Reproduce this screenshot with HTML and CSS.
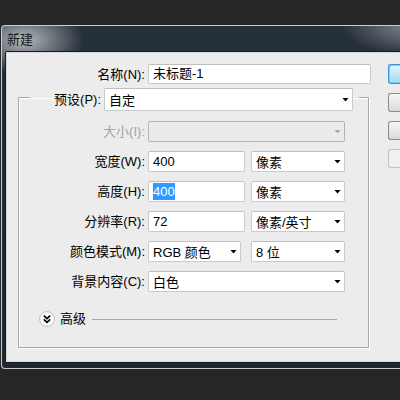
FILE: index.html
```html
<!DOCTYPE html>
<html lang="zh">
<head>
<meta charset="utf-8">
<title>新建</title>
<link rel="stylesheet" href="styles.css">
</head>
<body>
<div class="window">
  <div class="titlebar">新建</div>
  <div class="content">
    <div class="main">
      <div class="row-name">
        <div class="label name-label">名称(N):</div>
        <div class="field name-field">未标题-1</div>
      </div>
      <fieldset class="group">
        <legend class="legend">
          <span class="label legend-label">预设(P):</span>
          <span class="select preset">自定</span>
        </legend>
        <div class="row first">
          <div class="label disabled">大小(I):</div>
          <div class="select wide off"></div>
        </div>
        <div class="row">
          <div class="label">宽度(W):</div>
          <div class="field num">400</div>
          <div class="select unit">像素</div>
        </div>
        <div class="row">
          <div class="label">高度(H):</div>
          <div class="field num"><span class="sel">400</span></div>
          <div class="select unit">像素</div>
        </div>
        <div class="row">
          <div class="label">分辨率(R):</div>
          <div class="field num">72</div>
          <div class="select unit">像素/英寸</div>
        </div>
        <div class="row">
          <div class="label">颜色模式(M):</div>
          <div class="select mode">RGB 颜色</div>
          <div class="select unit">8 位</div>
        </div>
        <div class="row">
          <div class="label">背景内容(C):</div>
          <div class="select wide">白色</div>
        </div>
        <div class="advanced">
          <svg class="adv-icon" width="16" height="16" viewBox="0 0 16 16">
            <circle cx="8" cy="8" r="7.4" fill="#fdfdfd" stroke="#bdbdbd" stroke-width="1"/>
            <path d="M4.8 4.6 L8 7.6 L11.2 4.6 M4.8 8.4 L8 11.4 L11.2 8.4" fill="none" stroke="#000" stroke-width="1.7"/>
          </svg>
          <span class="adv-text">高级</span>
          <span class="adv-line"></span>
        </div>
      </fieldset>
    </div>
    <div class="side">
      <div class="btn primary"></div>
      <div class="btn"></div>
      <div class="btn"></div>
      <div class="btn off"></div>
    </div>
  </div>
</div>
</body>
</html>
```
FILE: styles.css
```css
html, body {
  margin: 0;
  padding: 0;
}
body {
  width: 400px;
  height: 400px;
  overflow: hidden;
  background: #262626;
  font-family: "Liberation Sans", "Noto Sans CJK SC", sans-serif;
  font-size: 13px;
  color: #000;
}
.window {
  box-sizing: border-box;
  margin-top: 25px;
  margin-left: 1px;
  width: 399px;
  border: 1px solid #c9cdd1;
  border-right: none;
  border-radius: 4px 0 0 4px;
  padding: 0 0 6px 4px;
  background:
    radial-gradient(ellipse 60px 34px at 22px 14px, rgba(205, 208, 212, 0.85), rgba(205, 208, 212, 0) 100%),
    radial-gradient(ellipse 70px 30px at 410px 0px, rgba(150, 156, 162, 0.8), rgba(150, 156, 162, 0) 100%),
    linear-gradient(to bottom, #26303b 0, #232c36 60px, #1f2731 100%);
}
.titlebar {
  height: 26px;
  line-height: 27px;
  padding-left: 1px;
  color: #141a22;
  font-size: 13px;
}
.content {
  display: flex;
  background: #ececec;
  border: 1px solid #d9d9d9;
  border-right: none;
  box-shadow: -1px 0 0 #161b21, 0 -1px 0 #161b21, 0 1px 0 #161b21;
  padding-top: 11px;
  box-sizing: border-box;
  height: 310px;
}
.main {
  width: 364px;
}
.label {
  text-align: right;
  white-space: nowrap;
  line-height: 21px;
}
.row-name {
  display: flex;
  align-items: center;
  height: 20px;
}
.name-label {
  width: 138px;
  margin-right: 3px;
}
.field {
  box-sizing: border-box;
  height: 21px;
  background: #fff;
  border: 1px solid #cacaca;
  border-top-color: #bfbfbf;
  border-radius: 2px;
  padding-left: 4px;
  line-height: 19px;
  white-space: nowrap;
}
.name-field {
  width: 223px;
  height: 20px;
  line-height: 18px;
}
.group {
  margin: 4px 0 0 11px;
  width: 351px;
  box-sizing: border-box;
  border: 1px solid #a9a9a9;
  box-shadow: inset 1px 1px 0 #fff, 1px 1px 0 #fff;
  padding: 0 0 20px 11px;
  min-width: 0;
}
.legend {
  display: flex;
  align-items: flex-start;
  height: 18px;
  padding: 0 6px 0 0;
  margin: 0;
}
.legend-label {
  width: 71px;
  margin-right: 3px;
  line-height: 23px;
}
.select {
  box-sizing: border-box;
  display: flex;
  align-items: center;
  height: 21px;
  background: #fff;
  border: 1px solid #cacaca;
  border-top-color: #bfbfbf;
  border-radius: 2px;
  padding: 0 3px 0 4px;
  white-space: nowrap;
}
.select::after {
  content: "";
  margin-left: auto;
  width: 7px;
  height: 4px;
  background: #000;
  clip-path: polygon(0 0, 100% 0, 50% 100%);
}
.preset {
  width: 249px;
  height: 23px;
}
.row {
  display: flex;
  align-items: center;
  height: 21px;
  margin-top: 9px;
}
.row.first {
  margin-top: 15px;
}
.row .label {
  width: 115px;
  margin-right: 3px;
}
.label.disabled {
  color: #a3a3a3;
}
.select.wide {
  width: 197px;
}
.select.off {
  background: #ebebeb;
  border-color: #b3b3b3;
}
.select.off::after {
  background: #a9a9a9;
}
.field.num {
  width: 97px;
  margin-right: 6px;
}
.select.unit {
  width: 94px;
}
.select.mode {
  width: 93px;
  margin-right: 10px;
}
.sel {
  background: #3399ff;
  color: #fff;
  display: inline-block;
  line-height: 17px;
}
.advanced {
  display: flex;
  align-items: center;
  height: 16px;
  margin-top: 19px;
}
.adv-icon {
  margin-left: 9px;
  display: block;
}
.adv-text {
  margin-left: 5px;
  line-height: 16px;
}
.adv-line {
  flex: 1;
  margin: 0 31px 0 6px;
  border-top: 1px solid #a8a8a8;
  height: 0;
}
.side {
  flex: 1;
  margin-left: 17px;
  display: flex;
  flex-direction: column;
}
.btn {
  box-sizing: border-box;
  height: 19px;
  margin-bottom: 9px;
  border: 1px solid #8c8c8c;
  border-right: none;
  border-radius: 3px 0 0 3px;
  background: linear-gradient(to bottom, #f6f6f6 0, #e9e9e9 50%, #dadada 100%);
}
.btn.primary {
  height: 20px;
  border-color: #3496d6;
  background: linear-gradient(to bottom, #e6f5fe 0, #c4e6fb 50%, #a6d8f6 100%);
  box-shadow: inset 1px 1px 0 #7fd0f5, inset 0 -1px 0 #7fd0f5;
}
.btn.off {
  border-color: #c2c2c2;
  background: #f1f1f1;
}
```
